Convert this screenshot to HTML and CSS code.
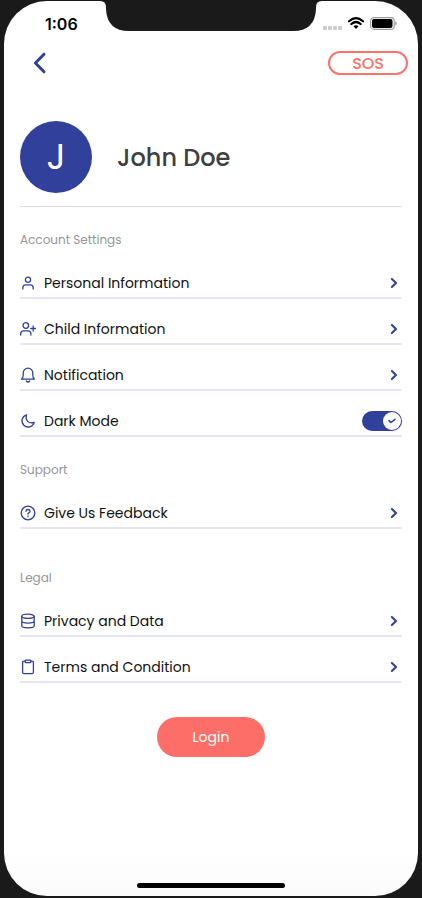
FILE: index.html
```html
<!DOCTYPE html>
<html lang="en">
<head>
<meta charset="utf-8">
<title>Account</title>
<link rel="stylesheet" href="styles.css">
</head>
<body>
<svg class="sprite" width="0" height="0">
  <symbol id="chevron" viewBox="0 0 8 12"><path d="M1.9 2 6 6l-4.1 4" stroke-width="2.1"/></symbol>
</svg>
<main class="screen">
  <svg class="notch" viewBox="0 0 222 31" width="222" height="31"><path d="M0 0V1Q6 1 6 7V9Q7 31 29 31H193Q215 31 216 9V7Q216 1 222 1V0Z"/></svg>
  <header class="status">
    <span class="time">1:06</span>
    <div class="signals">
      <span class="dots"><i></i><i></i><i></i><i></i></span>
      <svg class="wifi" viewBox="0 0 16 12" width="16" height="12"><path d="M1 4.3Q8-1.9 15 4.3M3.4 7Q8 3 12.6 7" fill="none" stroke="#000" stroke-width="2.2"/><path d="M5.5 9.2Q8 7.2 10.5 9.2L8 12Z"/></svg>
      <svg class="battery" viewBox="0 0 27 13" width="27" height="13"><rect x=".6" y=".6" width="23.6" height="11.8" rx="3.4" fill="#fff" stroke="#999" stroke-width="1.1"/><rect x="2" y="2" width="20.5" height="9" rx="2"/><path d="M25.2 4.3Q26.7 5 26.7 6.5T25.2 8.7Z" fill="#999"/></svg>
    </div>
  </header>
  <nav class="topbar">
    <svg class="back" viewBox="0 0 14 22" width="14" height="22"><path d="M11 2.2 2.4 11l8.6 8.8" stroke-width="3"/></svg>
    <button class="sos">SOS</button>
  </nav>
  <section class="profile">
    <div class="avatar">J</div>
    <h1>John Doe</h1>
  </section>
  <section class="group account">
    <h2>Account Settings</h2>
    <div class="row">
      <svg class="icon" viewBox="0 0 16 16"><circle cx="8" cy="4.8" r="2.6"/><path d="M2.8 14v-1.2Q2.8 9.8 5.8 9.8h4.4q3 0 3 3V14"/></svg>
      <span class="personal">Personal Information</span><svg class="chevron"><use href="#chevron"/></svg>
    </div>
    <div class="row">
      <svg class="icon" viewBox="0 0 16 16"><circle cx="5.8" cy="4.5" r="2.8"/><path d="M.7 14v-1.2q0-3 3-3h4.2q3 0 3 3V14M13.2 5v5M10.7 7.5h5"/></svg>
      <span class="child">Child Information</span><svg class="chevron"><use href="#chevron"/></svg>
    </div>
    <div class="row">
      <svg class="icon" viewBox="0 0 16 16"><path d="M1.5 12.1h13q-1.7-1.2-1.7-3.5V6A4.8 4.8 0 0 0 3.2 6v2.6q0 2.3-1.7 3.5Z"/><path d="M6.3 14Q8 16 9.7 14"/></svg>
      <span class="notify">Notification</span><svg class="chevron"><use href="#chevron"/></svg>
    </div>
    <div class="row">
      <svg class="icon" viewBox="0 0 16 16"><path d="M6.6 1.8A6.2 6.2 0 1 0 14.2 9.4Q10 10.7 7.7 8.4T6.6 1.8Z"/></svg>
      <span class="dark">Dark Mode</span>
      <div class="toggle"><div class="knob"><svg viewBox="0 0 8 6" width="8" height="6"><path d="m1 2.6 2 1.9L7 1.3" stroke-width="1.5"/></svg></div></div>
    </div>
  </section>
  <section class="group support">
    <h2>Support</h2>
    <div class="row">
      <svg class="icon" viewBox="0 0 16 16"><circle cx="8" cy="8" r="6.8"/><path d="M6 6.3Q6.1 4.5 8 4.5T10 6.2Q10 7.3 8.7 7.9 8 8.3 8 9.1M8 11v.6"/></svg>
      <span class="feedback">Give Us Feedback</span><svg class="chevron"><use href="#chevron"/></svg>
    </div>
  </section>
  <section class="group legal">
    <h2>Legal</h2>
    <div class="row">
      <svg class="icon" viewBox="0 0 16 16"><ellipse cx="8" cy="3.3" rx="6.2" ry="2.1"/><path d="M1.8 3.3v9.4c0 2.8 12.4 2.8 12.4 0V3.3M1.8 8c0 2.8 12.4 2.8 12.4 0"/></svg>
      <span class="privacy">Privacy and Data</span><svg class="chevron"><use href="#chevron"/></svg>
    </div>
    <div class="row">
      <svg class="icon" viewBox="0 0 16 16"><path d="M5.2 2.2H4Q2.6 2.2 2.6 3.6v9.6q0 1.4 1.4 1.4h8q1.4 0 1.4-1.4V3.6q0-1.4-1.4-1.4h-1.2"/><rect x="5.2" y="1.1" width="5.6" height="2.6" rx=".8"/></svg>
      <span class="terms">Terms and Condition</span><svg class="chevron"><use href="#chevron"/></svg>
    </div>
  </section>
  <button class="login">Login</button>
  <div class="home"></div>
</main>
</body>
</html>
```
FILE: styles.css
```css
* { box-sizing: border-box; }
body { margin: 0; height: 898px; padding: 1px 4px 2px; background: #1a1a1a; font-family: Poppins, Inter, sans-serif; }
button { font: inherit; padding: 0; }
h1, h2 { margin: 0; }
.sprite { position: absolute; }
.screen { position: relative; display: flex; flex-direction: column; height: 895px; padding: 0 16px; border-radius: 43px; background: linear-gradient(#fff 850px, #fbfbfb); }
.notch { position: absolute; left: 96px; top: -1px; fill: #1a1a1a; }
.status { display: flex; justify-content: space-between; height: 40px; padding: 12px 5px 0 25px; }
.time { font: 600 16px/22px Inter, sans-serif; letter-spacing: 0; }
.signals { display: flex; }
.dots { display: flex; gap: 1px; margin: 13px 6px 0 0; }
.dots i { width: 4px; height: 4px; border-radius: 1px; background: #ccc; }
.wifi { margin: 4px 6px 0 0; }
.battery { margin-top: 4px; }
.topbar { display: flex; justify-content: space-between; height: 44px; margin-right: -6px; padding: 10px 0 0 13px; }
svg path, svg circle, svg ellipse { stroke-linecap: round; stroke-linejoin: round; }
.back, .icon, .chevron, .knob svg { fill: none; stroke: #31409b; }
.back { margin-top: 1px; }
.sos { width: 80px; height: 24px; border: 2px solid #fa7268; border-radius: 12px; background: #fff; color: #fa7268; font-size: 16px; font-weight: 500; line-height: 22px; letter-spacing: -.1px; }
.profile { display: flex; height: 122px; padding-top: 36px; border-bottom: 1px solid #d9dcef; }
.avatar { width: 72px; height: 72px; border-radius: 50%; background: #31409b; color: #fff; font-size: 36px; font-weight: 400; line-height: 72px; text-align: center; }
h1 { margin-left: 25px; color: #404040; font-size: 24px; font-weight: 500; line-height: 73px; }
.group h2 { color: #969696; font-size: 12px; font-weight: 400; line-height: 20px; }
.account { padding-top: 23px; }
.account h2, .support h2, .legal h2 { margin-bottom: 3px; }
.support { padding-top: 23px; }
.legal { padding-top: 39px; }
.row { display: flex; align-items: center; height: 46px; padding-top: 15px; border-bottom: 2px solid #e5e7f5; color: #111; font-size: 14px; line-height: 24px; }
.icon { width: 16px; height: 16px; margin-right: 8px; stroke-width: 1.3; flex: none; }
.row span { flex: 1; white-space: nowrap; }
.chevron { width: 8px; height: 12px; margin-right: 4px; }
.toggle { width: 40px; height: 20px; padding: 1px; border-radius: 10px; background: #31409b; }
.knob { display: flex; align-items: center; justify-content: center; width: 18px; height: 18px; margin-left: auto; border-radius: 50%; background: #fff; }
.login { align-self: center; width: 108px; height: 40px; margin-top: 34px; border: 0; border-radius: 20px; background: #fc6e67; color: #fff; font-size: 14px; line-height: 40px; }
.home { align-self: center; width: 148px; height: 5px; margin: auto 0 8px; border-radius: 3px; background: #000; }
```
